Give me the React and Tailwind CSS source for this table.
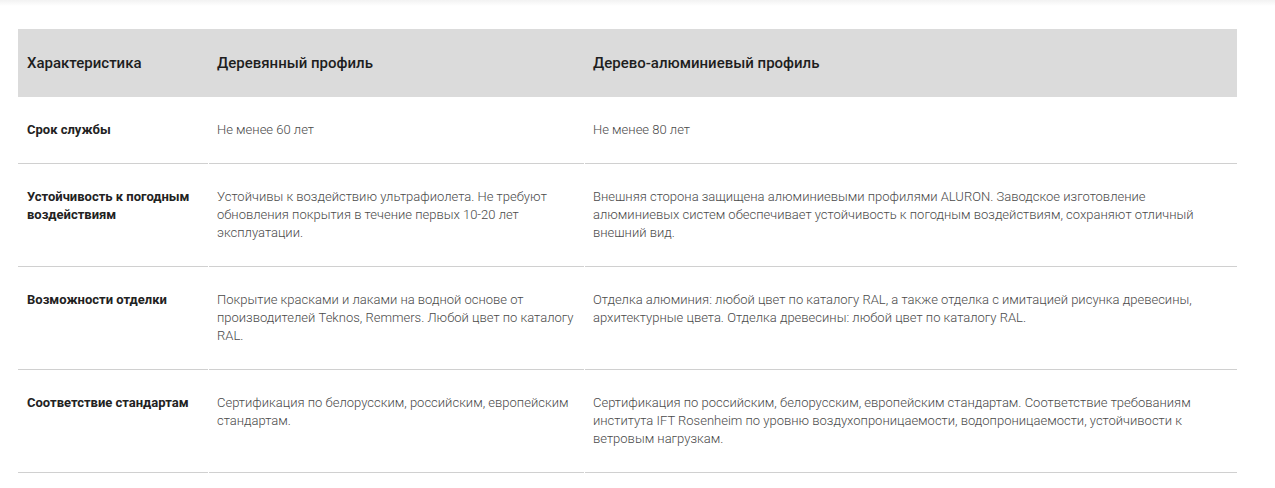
import React from 'react';

const rows = [
    {
        label: 'Срок службы',
        wood: 'Не менее 60 лет',
        alu: 'Не менее 80 лет',
    },
    {
        label: 'Устойчивость к погодным воздействиям',
        wood: 'Устойчивы к воздействию ультрафиолета. Не требуют обновления покрытия в течение первых 10-20 лет эксплуатации.',
        alu: 'Внешняя сторона защищена алюминиевыми профилями ALURON. Заводское изготовление алюминиевых систем обеспечивает устойчивость к погодным воздействиям, сохраняют отличный внешний вид.',
    },
    {
        label: 'Возможности отделки',
        wood: 'Покрытие красками и лаками на водной основе от производителей Teknos, Remmers. Любой цвет по каталогу RAL.',
        alu: 'Отделка алюминия: любой цвет по каталогу RAL, а также отделка с имитацией рисунка древесины, архитектурные цвета. Отделка древесины: любой цвет по каталогу RAL.',
    },
    {
        label: 'Соответствие стандартам',
        wood: 'Сертификация по белорусским, российским, европейским стандартам.',
        alu: 'Сертификация по российским, белорусским, европейским стандартам. Соответствие требованиям института IFT Rosenheim по уровню воздухопроницаемости, водопроницаемости, устойчивости к ветровым нагрузкам.',
    },
];

const App = () => {
    return (
        <div className="min-h-screen bg-white font-['Roboto',sans-serif]">
            {/* faint shadow from the header above */}
            <div className="h-[6px] bg-gradient-to-b from-[#f2f2f2] to-white" />

            <div className="pl-[18px] pr-[38px] pt-[23px]">
                <div className="grid grid-cols-[190px_375px_1fr] gap-x-px bg-[#dbdbdb] h-[68px] items-center text-[15px] font-medium text-[#1e1e1e]">
                    <div className="pl-[9px]">Характеристика</div>
                    <div className="pl-[8px]">Деревянный профиль</div>
                    <div className="pl-[8px]">Дерево-алюминиевый профиль</div>
                </div>

                {rows.map((row, i) => (
                    <div key={row.label} className="grid grid-cols-[190px_375px_1fr] gap-x-px text-[13px] leading-[18px]">
                        <div className={`border-b border-[#d0d0d0] pt-[24px] pl-[9px] pr-[6px] font-bold text-[#222] ${i === 3 ? 'pb-[25px]' : 'pb-[24px]'}`}>
                            {row.label}
                        </div>
                        <div className="border-b border-[#d0d0d0] pt-[24px] pb-[24px] pl-[8px] pr-[6px] font-light text-[#4a4a4a]">
                            {row.wood}
                        </div>
                        <div className="border-b border-[#d0d0d0] pt-[24px] pb-[24px] pl-[8px] pr-[27px] font-light text-[#4a4a4a]">
                            {row.alu}
                        </div>
                    </div>
                ))}
            </div>
        </div>
    );
};

export default App;
